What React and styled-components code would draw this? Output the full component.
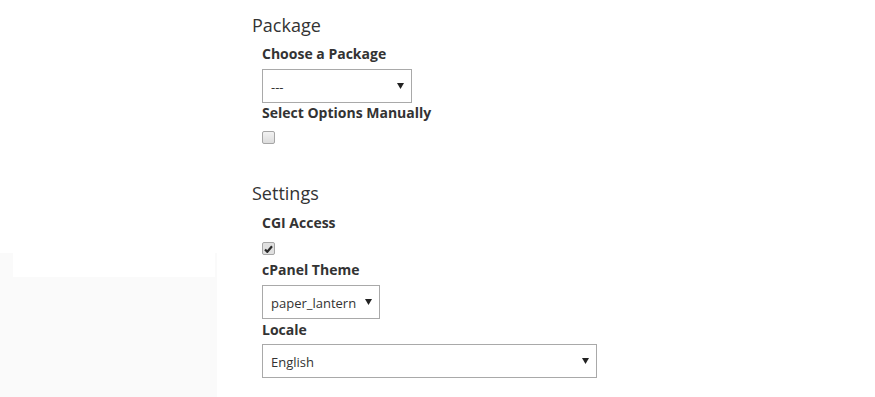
import React from "react";
import styled, { createGlobalStyle } from "styled-components";

const Global = createGlobalStyle`
  html, body { margin: 0; padding: 0; background: #fff; }
  body { font-family: "Open Sans", "Liberation Sans", sans-serif; color: #333; }
  * { box-sizing: border-box; }
`;

const Page = styled.div`
  display: flex;
  width: 875px;
  height: 397px;
  overflow: hidden;
`;

const Sidebar = styled.aside`
  width: 217px;
  flex: none;
  display: flex;
  flex-direction: column;
  padding-top: 253px;
`;

const SidebarPanel = styled.div`
  flex: 1;
  background: #fafafa;
  padding: 0 2px 0 13px;
`;

const SidebarBlank = styled.div`
  height: 24px;
  background: #fff;
`;

const Main = styled.main`
  flex: 1;
  padding: 13px 0 0 35px;
`;

const Section = styled.section`
  margin-bottom: ${(p) => p.$gap || 0}px;
`;

const Heading = styled.h3`
  margin: 0 0 ${(p) => p.$mb || 8}px;
  font-size: 18px;
  line-height: 24px;
  font-weight: 400;
  color: #333;
`;

const Fields = styled.div`
  padding-left: 10px;
  display: flex;
  flex-direction: column;
`;

const Field = styled.div`
  display: flex;
  flex-direction: column;
  align-items: flex-start;
  margin-bottom: ${(p) => p.$mb || 0}px;
`;

const Label = styled.label`
  font-size: 14px;
  line-height: 20px;
  font-weight: 700;
  color: #333;
  margin-bottom: ${(p) => p.$mb || 4}px;
`;

const SelectWrap = styled.div`
  position: relative;
  width: ${(p) => p.$w}px;
  height: 34px;
`;

const Select = styled.select`
  appearance: none;
  -webkit-appearance: none;
  width: 100%;
  height: 100%;
  border: 1px solid #a9a9a9;
  border-radius: 0;
  background: #fff;
  padding: 2px 20px 0 8px;
  font-family: "Open Sans", "Liberation Sans", sans-serif;
  font-size: 13px;
  color: #333;
  outline: none;
`;

const Arrow = styled.svg`
  position: absolute;
  right: 8px;
  top: 14px;
  pointer-events: none;
`;

const Check = styled.span`
  display: inline-flex;
  align-items: center;
  justify-content: center;
  width: 13px;
  height: 13px;
  border: 1px solid #a6a6a6;
  border-radius: 2px;
  background: ${(p) => (p.$checked ? "#e0e0e0" : "linear-gradient(#f2f2f2, #dcdcdc)")};
`;

const SelectBox = ({ w, value, options }) => (
  <SelectWrap $w={w}>
    <Select defaultValue={value}>
      {options.map((o) => (
        <option key={o}>{o}</option>
      ))}
    </Select>
    <Arrow width="7" height="6" viewBox="0 0 7 6">
      <path d="M0 0 H7 L3.5 6 Z" fill="#222" />
    </Arrow>
  </SelectWrap>
);

const CheckBox = ({ checked }) => (
  <Check $checked={checked}>
    {checked && (
      <svg width="9" height="8" viewBox="0 0 9 8">
        <path d="M1 4.5 L3.3 6.8 L8 1.2" stroke="#2a2a2a" strokeWidth="2.2" fill="none" />
      </svg>
    )}
  </Check>
);

export default function App() {
  return (
    <>
      <Global />
      <Page>
        <Sidebar>
          <SidebarPanel>
            <SidebarBlank />
          </SidebarPanel>
        </Sidebar>
        <Main>
          <Section $gap={36}>
            <Heading $mb={7}>Package</Heading>
            <Fields>
              <Field>
                <Label $mb={5}>Choose a Package</Label>
                <SelectBox w={150} value="---" options={["---"]} />
              </Field>
              <Field $mb={1}>
                <Label $mb={8}>Select Options Manually</Label>
                <CheckBox />
              </Field>
            </Fields>
          </Section>
          <Section>
            <Heading>Settings</Heading>
            <Fields>
              <Field $mb={5}>
                <Label $mb={9}>CGI Access</Label>
                <CheckBox checked />
              </Field>
              <Field $mb={1}>
                <Label $mb={5}>cPanel Theme</Label>
                <SelectBox w={118} value="paper_lantern" options={["paper_lantern"]} />
              </Field>
              <Field>
                <Label $mb={4}>Locale</Label>
                <SelectBox w={335} value="English" options={["English"]} />
              </Field>
            </Fields>
          </Section>
        </Main>
      </Page>
    </>
  );
}
